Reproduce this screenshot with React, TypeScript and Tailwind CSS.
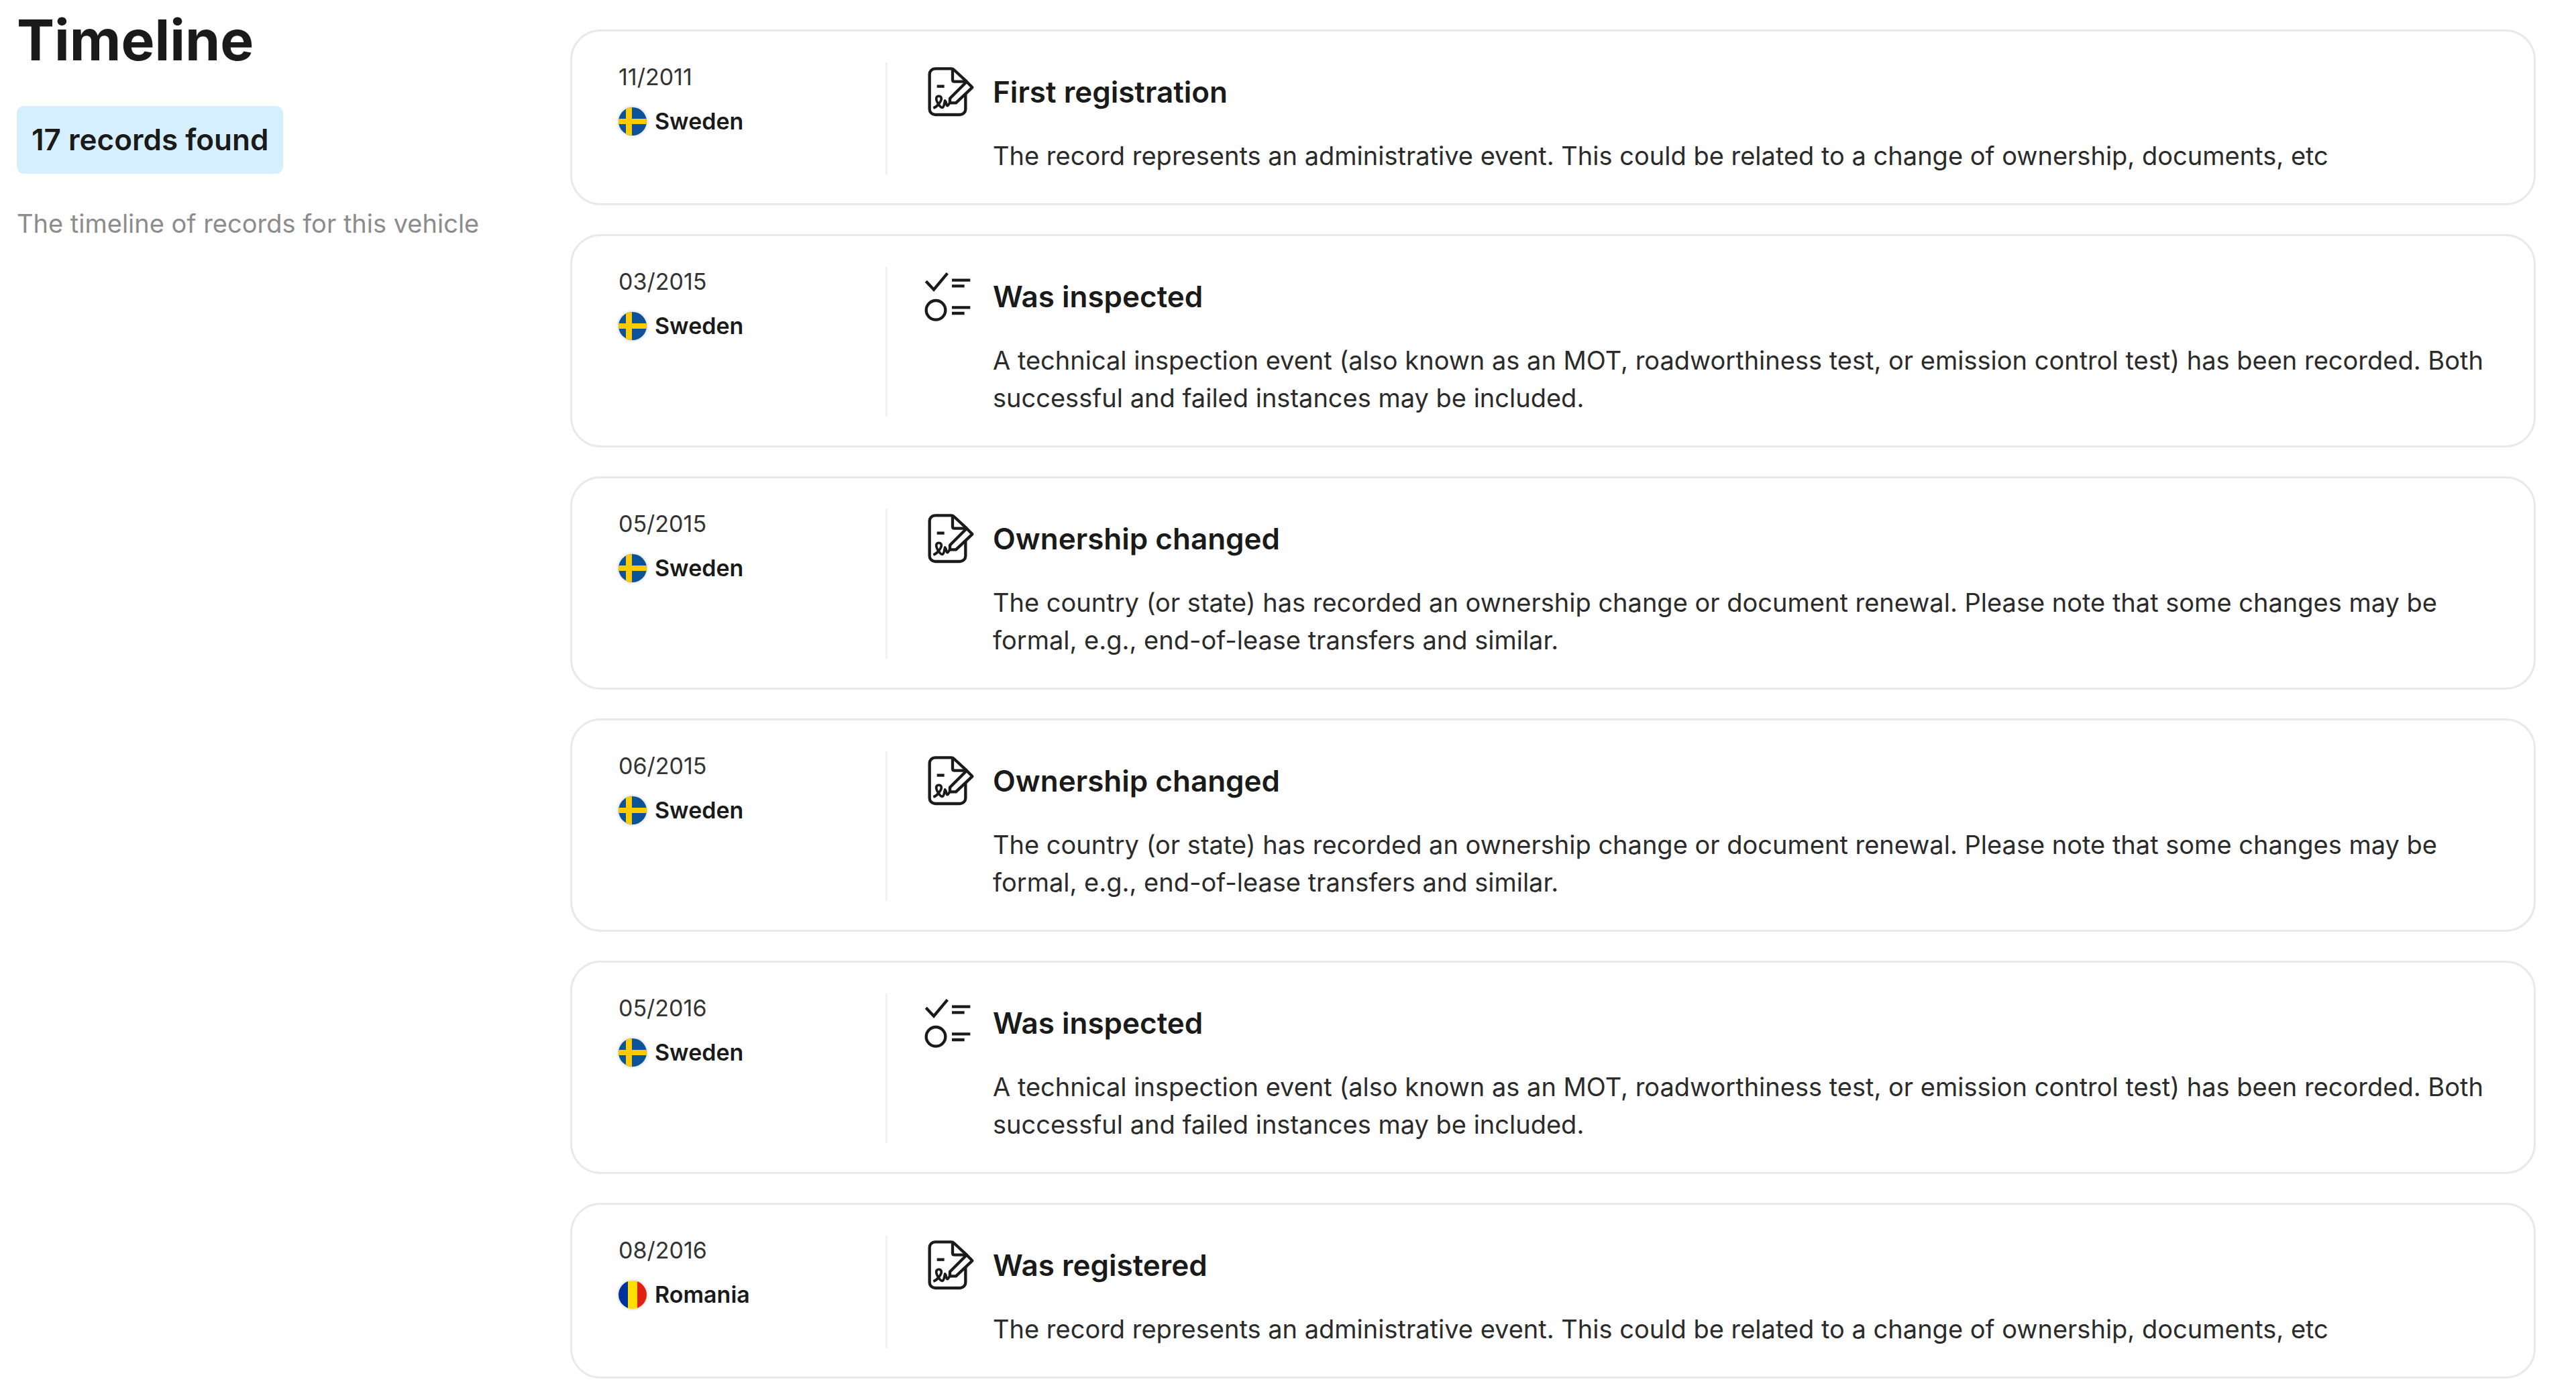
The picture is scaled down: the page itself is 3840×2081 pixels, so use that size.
type Country = "Sweden" | "Romania";

type TimelineRecord = {
  date: string;
  country: Country;
  icon: "document" | "inspection";
  title: string;
  text: string;
};

const administrative =
  "The record represents an administrative event. This could be related to a change of ownership, documents, etc";
const inspection =
  "A technical inspection event (also known as an MOT, roadworthiness test, or emission control test) has been recorded. Both successful and failed instances may be included.";
const ownership =
  "The country (or state) has recorded an ownership change or document renewal. Please note that some changes may be formal, e.g., end-of-lease transfers and similar.";

const records: TimelineRecord[] = [
  { date: "11/2011", country: "Sweden", icon: "document", title: "First registration", text: administrative },
  { date: "03/2015", country: "Sweden", icon: "inspection", title: "Was inspected", text: inspection },
  { date: "05/2015", country: "Sweden", icon: "document", title: "Ownership changed", text: ownership },
  { date: "06/2015", country: "Sweden", icon: "document", title: "Ownership changed", text: ownership },
  { date: "05/2016", country: "Sweden", icon: "inspection", title: "Was inspected", text: inspection },
  { date: "08/2016", country: "Romania", icon: "document", title: "Was registered", text: administrative },
];

function DocumentIcon() {
  return (
    <svg
      className="size-[78px] shrink-0"
      viewBox="0 0 234 234"
      fill="none"
      stroke="currentColor"
      strokeWidth="13"
      strokeLinejoin="round"
      aria-hidden="true"
    >
      <path d="M190 124V194A25 25 0 0 1 165 219H54A25 25 0 0 1 29 194V38A25 25 0 0 1 54 13H126Q133 13 138 18L195 71" />
      <path d="M132 15V62Q132 71 141 71H195" />
      <path d="M195 71L220 97L147 166H120V146Z" />
      <path d="M62 92H95" />
      <path strokeWidth="11" d="M46 189C64 184 82 158 82 147C82 132 59 132 59 147C59 160 76 187 86 187C95 186 95 164 98 156C105 162 103 179 109 179C114 179 114 168 122 165" />
    </svg>
  );
}

function InspectionIcon() {
  return (
    <svg
      className="size-[78px] shrink-0"
      viewBox="0 0 234 234"
      fill="none"
      stroke="currentColor"
      strokeWidth="13"
      aria-hidden="true"
    >
      <path d="M13 49L48 86L109 13" />
      <circle cx="57" cy="178" r="43" />
      <path d="M129 44H211M129 166H211" />
      <path d="M129 70H185M129 192H185" />
    </svg>
  );
}

function Flag({ country }: { country: Country }) {
  return (
    <svg
      className="size-[42px] shrink-0 rounded-full shadow-[0_0_5px_rgba(0,0,0,0.25)]"
      viewBox="0 0 42 42"
      aria-hidden="true"
    >
      {country === "Sweden" ? (
        <>
          <path fill="#0b5299" d="M0 0H42V42H0Z" />
          <path fill="#fecb00" d="M11 0H20V42H11ZM0 17H42V25H0Z" />
        </>
      ) : (
        <>
          <path fill="#00319c" d="M0 0H14V42H0Z" />
          <path fill="#ffde00" d="M14 0H28V42H14Z" />
          <path fill="#de2110" d="M28 0H42V42H28Z" />
        </>
      )}
    </svg>
  );
}

function RecordCard({ record }: { record: TimelineRecord }) {
  return (
    <li className="flex rounded-[45px] border-3 border-[#e9e9e9] pt-[46px] pr-[60px] pb-[43px] pl-[69px]">
      <div className="flex w-[398px] shrink-0 flex-col gap-[22px] text-[34px] leading-[44px]">
        <time className="text-[#333333]">{record.date}</time>
        <div className="flex items-center gap-3 font-semibold">
          <Flag country={record.country} />
          {record.country}
        </div>
      </div>
      <div className="flex-1 border-l-3 border-[#f1f1f1] pl-[53px]">
        <div className="flex h-[87px] items-center gap-[26px]">
          {record.icon === "document" ? <DocumentIcon /> : <InspectionIcon />}
          <h2 className="text-[44px] leading-[56px] font-semibold">{record.title}</h2>
        </div>
        <p className="mt-6 pl-[104px] text-[38px] leading-[56px] text-[#2b2b2b]">{record.text}</p>
      </div>
    </li>
  );
}

export default function App() {
  return (
    <main className="flex min-h-screen bg-white pr-[60px] pl-[25px] font-['Inter',sans-serif] text-[#1a1a1a]">
      <aside className="w-[825px] shrink-0 pt-[10px]">
        <h1 className="text-[84px] leading-[100px] font-bold">Timeline</h1>
        <div className="mt-12 w-fit rounded-[11px] bg-[#d6efff] px-[22px] py-[22px] text-[44px] leading-[57px] font-semibold">
          17 records found
        </div>
        <p className="mt-[46px] text-[38px] leading-[56px] text-[#8c8c8c]">
          The timeline of records for this vehicle
        </p>
      </aside>
      <ol className="flex flex-1 flex-col gap-[43px] pt-[44px] pb-[25px]">
        {records.map((record) => (
          <RecordCard key={record.date} record={record} />
        ))}
      </ol>
    </main>
  );
}
